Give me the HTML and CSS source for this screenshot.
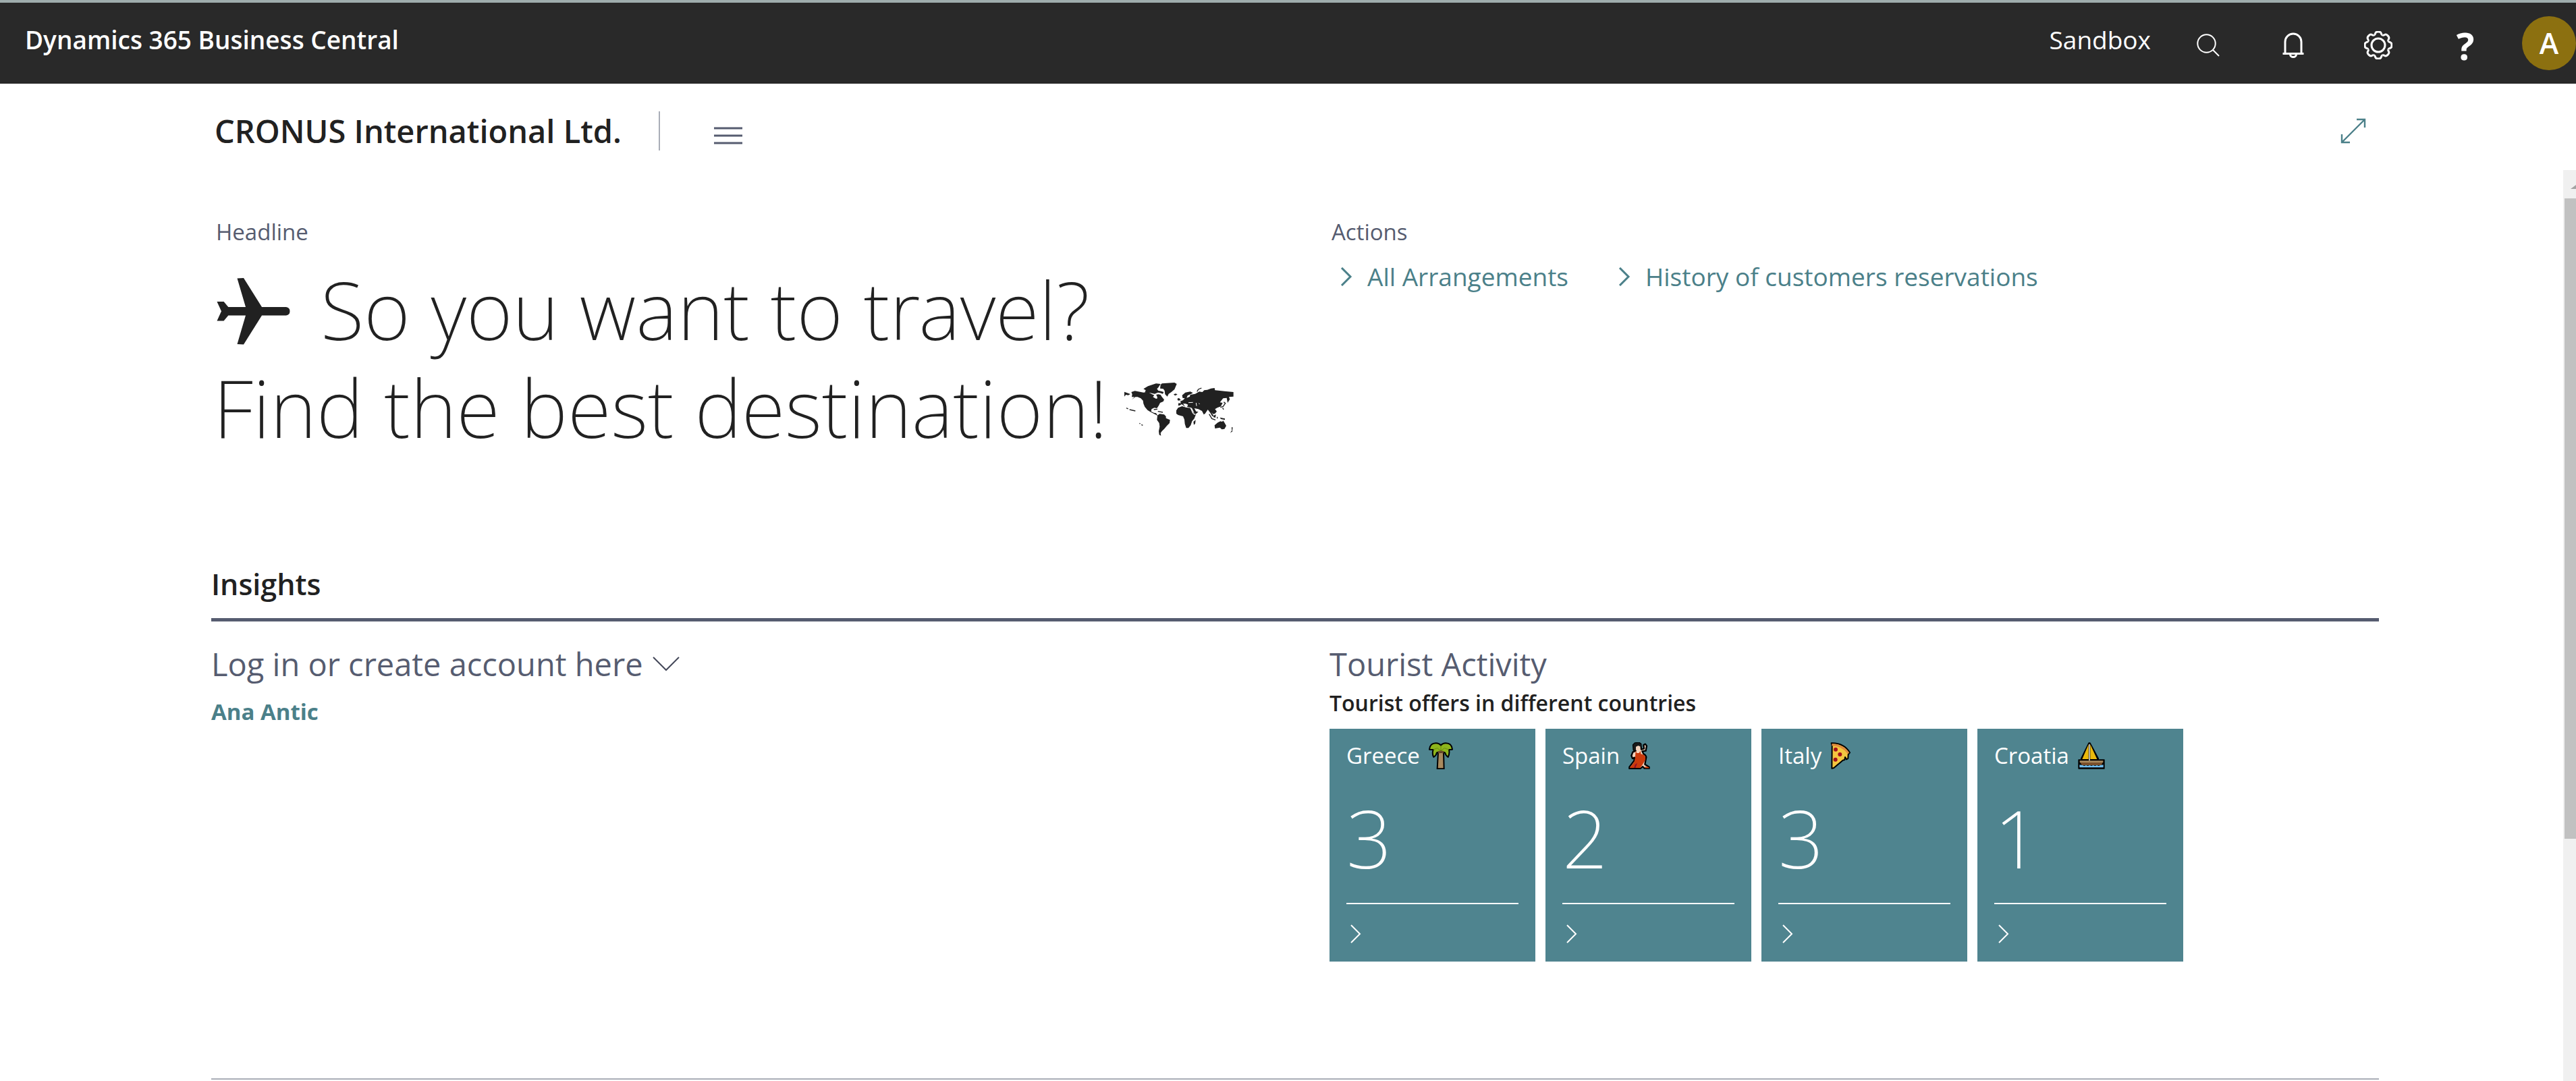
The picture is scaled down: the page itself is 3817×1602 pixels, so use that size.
FILE: index.html
```html
<!DOCTYPE html>
<html lang="en">
<head>
<meta charset="utf-8">
<title>Dynamics 365 Business Central</title>
<link rel="stylesheet" href="styles.css">
</head>
<body>
<header class="topbar">
  <a class="brand" href="#">Dynamics 365 Business Central</a>
  <span class="environment">Sandbox</span>
  <button class="tool" type="button" aria-label="Search">
    <svg width="42" height="42" viewBox="0 0 42 42" class="line-icon"><circle cx="18.500" cy="18.500" r="13.200"/><path d="M28 28L37 37"/></svg>
  </button>
  <button class="tool" type="button" aria-label="Notifications">
    <svg width="42" height="42" viewBox="0 0 42 42" class="line-icon bold"><path d="M9 34V16a12 12 0 0 1 24 0V34M5.500 33.500H36.500M16.500 34.500a4.500 4 0 0 0 9 0"/></svg>
  </button>
  <button class="tool" type="button" aria-label="Settings">
    <svg width="42" height="42" viewBox="-21 -21 42 42" class="line-icon bold">
      <defs><path id="tooth" d="M-6.200 -15C-4.500 -15.500 -4.600 -17 -4.200 -18Q-3.500 -20 0 -20Q3.500 -20 4.200 -18C4.600 -17 4.500 -15.500 6.200 -15"/></defs>
      <circle r="10"/>
      <use href="#tooth"/><use href="#tooth" transform="rotate(45)"/><use href="#tooth" transform="rotate(90)"/><use href="#tooth" transform="rotate(135)"/><use href="#tooth" transform="rotate(180)"/><use href="#tooth" transform="rotate(225)"/><use href="#tooth" transform="rotate(270)"/><use href="#tooth" transform="rotate(315)"/>
    </svg>
  </button>
  <button class="tool help" type="button" aria-label="Help">?</button>
  <button class="avatar" type="button" aria-label="Account">A</button>
</header>

<div class="company-bar">
  <h1 class="company">CRONUS International Ltd.</h1>
  <button class="menu" type="button" aria-label="Menu">
    <svg width="42" height="42" viewBox="0 0 42 42"><path d="M0 17h42M0 28h42M0 39h42" fill="none" stroke="#565c70" stroke-width="3"/></svg>
  </button>
  <button class="expand" type="button" aria-label="Expand">
    <svg width="38" height="38" viewBox="0 0 38 38"><path d="M2 36L36 2M24 2H36V14M2 24V36H14" fill="none" stroke="#4b8089" stroke-width="2.400"/></svg>
  </button>
</div>

<div class="workspace">
  <main class="content">
    <div class="columns intro">
      <section>
        <h2 class="caption">Headline</h2>
        <p class="headline">
          <svg class="plane" width="109" height="99" viewBox="0 0 109 99"><path fill="#212121" d="M30.500 .5L40 0L67 43H103Q108.500 44 108.500 49.200T103 55.500H67L40 98.500L30.500 98L43 55.500H17.300L10.600 63.600H.5L7 49.200L.5 35H10.600L17.300 43H43Z"/></svg>So you want to travel?<br>Find the best destination!<svg class="map" width="162" height="82" viewBox="45 40 486 246"><g fill="#212121"><path d="M76 82L92 77L130 84L150 82L168 92L178 96L172 104L186 112L192 110L190 100L186 94L196 92L206 94L212 104L222 116L218 124L204 130L198 142L190 154L178 152L166 158L164 168L176 174L186 176L190 182L194 188L180 180L160 170L148 162L136 148L130 134L128 120L118 110L104 104L94 104L78 116L90 104L78 104L80 92Z"/><path d="M130 68L150 56L186 44L206 46L196 62L190 68L196 76L208 78L220 82L216 90L204 86L194 84L180 90L160 86L136 84L140 74Z"/><path d="M206 50L212 44L268 40L278 46L268 70L254 82L242 90L236 102L226 92L224 76L218 68L204 66Z"/><path d="M45 81L72 91L62 96L52 94L45 102Z"/><path d="M264 92L274 89L281 93L270 98Z"/><path d="M192 186L202 179L222 182L230 190L230 198L248 206L246 220L234 232L222 246L212 256L206 264L208 276L200 272L198 256L202 236L200 220L190 206Z"/><path d="M276 164L284 152L302 145L318 150L338 153L348 176L356 183L363 182L356 200L346 212L340 230L330 242L320 242L314 224L312 204L306 190L284 184L276 178Z"/><path d="M352 214L362 206L360 222L354 228Z"/><path d="M284 142L286 131L296 132L294 123L306 118L314 110L304 108L302 96L316 84L338 80L350 86L342 90L326 98L322 108L336 102L338 94L360 90L378 80L392 82L400 74L414 72L430 66L446 64L448 74L470 76L490 78L530 82V102L510 104L514 114L504 130L500 108L484 110L470 128L482 130L474 146L458 152L448 158L456 168L448 178L440 180L432 172L442 188L436 190L428 176L416 160L404 178L398 182L390 166L374 158L356 154L364 168L374 170L362 180L352 176L343 152L324 148L328 138L318 134L306 134L316 148L300 136L290 142Z"/><path d="M446 230L460 218L472 212L480 214L484 209L490 218L498 232L490 246L478 248L470 240L448 244Z"/><path d="M280 112L288 108L296 118L284 120ZM440 188L452 182L450 196L442 194ZM516 264L522 252L528 254ZM470 195L492 200L492 206L474 202Z"/></g><g fill="none" stroke="#212121" stroke-width="4"><path d="M368 80L374 70L388 64M54 153L62 157M68 160L94 166M112 221L116 223M121 227L127 230M176 160L192 158M194 168L216 172M422 180L434 200L450 206M458 192V200M487 126L494 132L484 146L472 150M482 152L486 160M524 238V250"/></g><g fill="none" stroke="#fff" stroke-width="3"><path d="M330 129L350 128M364 130L366 144M376 132L380 136M344 154L354 174"/></g></svg>
        </p>
      </section>
      <section>
        <h2 class="caption">Actions</h2>
        <nav class="actions" aria-label="Actions">
          <a href="#"><svg width="18" height="28" viewBox="0 0 18 28"><path d="M2 1L15 14L2 27" fill="none" stroke="#4b8089" stroke-width="3"/></svg>All Arrangements</a>
          <a href="#"><svg width="18" height="28" viewBox="0 0 18 28"><path d="M2 1L15 14L2 27" fill="none" stroke="#4b8089" stroke-width="3"/></svg>History of customers reservations</a>
        </nav>
      </section>
    </div>

    <h2 class="group-title">Insights</h2>

    <div class="columns insights">
      <section>
        <h3 class="part-title"><button class="part-menu" type="button">Log in or create account here<svg width="40" height="24" viewBox="0 0 40 24"><path d="M1 2L20 21L39 2" fill="none" stroke="#45495a" stroke-width="2"/></svg></button></h3>
        <a class="user-link" href="#">Ana Antic</a>
      </section>
      <section>
        <h3 class="part-title">Tourist Activity</h3>
        <h4 class="cue-title">Tourist offers in different countries</h4>
        <div class="tiles">
          <a class="tile" href="#">
            <span class="tile-label">Greece
              <svg width="36" height="40" viewBox="0 0 108 120"><path d="M42 44L38 118H68L66 44Z" fill="#a98a5e" stroke="#000" stroke-width="6"/><path d="M3 32Q6 4 32 4Q46 4 54 14Q62 4 76 4Q102 4 105 32L90 33Q94 50 86 66Q76 60 72 46L54 40L36 46Q34 58 22 66Q14 52 20 33Z" fill="#8db51c" stroke="#000" stroke-width="6" stroke-linejoin="round"/><path d="M20 33L38 26L54 38L70 26L90 33M54 14V38" fill="none" stroke="#6b8a12" stroke-width="3"/><path d="M40 41Q54 34 68 41L64 50L54 46L44 51Z" fill="#6b4a2a"/></svg></span>
            <span class="tile-value">3</span>
            <span class="tile-foot"><svg width="18" height="28" viewBox="0 0 18 28"><path d="M2 1L15 14L2 27" fill="none" stroke="#fff" stroke-width="2"/></svg></span>
          </a>
          <a class="tile" href="#">
            <span class="tile-label">Spain
              <svg width="32" height="40" viewBox="0 0 94 120"><path d="M31 38L18 44L12 60L17 72L26 68L24 82L3 110V117H52L62 108L70 116H91V110L72 98L78 66Q76 56 66 52L60 40L76 38L80 16L74 8L66 12L68 28L56 32L54 8L46 2L28 4L20 12L22 34Z" fill="#f3d3bd" stroke="#000" stroke-width="7" stroke-linejoin="round"/><path d="M31 38L36 48H46L52 38L54 52L68 56Q76 62 74 78L60 102L50 114H5L8 108Q26 90 28 76Z" fill="#c93a0c"/><path d="M38 92L30 114H24L28 100Z" fill="#8e0e2c"/><path d="M72 108L90 111V115H74Z" fill="#d83b01"/><path d="M22 34L20 12L28 4L46 2L55 10V20L42 15L32 20V36Z" fill="#1a1a1a"/></svg></span>
            <span class="tile-value">2</span>
            <span class="tile-foot"><svg width="18" height="28" viewBox="0 0 18 28"><path d="M2 1L15 14L2 27" fill="none" stroke="#fff" stroke-width="2"/></svg></span>
          </a>
          <a class="tile" href="#">
            <span class="tile-label">Italy
              <svg width="31" height="40" viewBox="0 0 93 120"><path d="M5 4Q60 2 87 46L80 54L79 72L72 76L66 66L64 78L56 80L16 114L7 116L8 16Z" fill="#f4c63f" stroke="#000" stroke-width="6" stroke-linejoin="round"/><path d="M7 7Q58 8 84 47L78 52Q52 16 7 16Z" fill="#e08a3e"/><circle cx="24" cy="32" r="9" fill="#a4101c"/><circle cx="43" cy="54" r="9" fill="#a4101c"/><circle cx="23" cy="77" r="9" fill="#a4101c"/></svg></span>
            <span class="tile-value">3</span>
            <span class="tile-foot"><svg width="18" height="28" viewBox="0 0 18 28"><path d="M2 1L15 14L2 27" fill="none" stroke="#fff" stroke-width="2"/></svg></span>
          </a>
          <a class="tile" href="#">
            <span class="tile-label">Croatia
              <svg width="40" height="40" viewBox="0 0 120 120"><path d="M48 3H54L91 72V78H117V117H3V78H14V72Z" fill="#000" stroke="#000" stroke-width="4" stroke-linejoin="round"/><path d="M47 10L19 75H47ZM55 10L85 75H55Z" fill="#eab90c"/><path d="M51 8V82" stroke="#d2cfc4" stroke-width="5"/><path d="M8 82H112V90H8Z" fill="#a98a5e"/><path d="M10 90H110L104 102H18Z" fill="#7a4f2b"/><path d="M7 100L20 102L28 105L36 102L44 105L52 102L60 105L68 102L76 105L84 102L92 105L100 102L113 100V112H7Z" fill="#6fbdf0"/></svg></span>
            <span class="tile-value">1</span>
            <span class="tile-foot"><svg width="18" height="28" viewBox="0 0 18 28"><path d="M2 1L15 14L2 27" fill="none" stroke="#fff" stroke-width="2"/></svg></span>
          </a>
        </div>
      </section>
    </div>
    <hr class="divider">
  </main>
  <div class="scrollbar">
    <svg class="scroll-up" width="16" height="10" viewBox="0 0 16 10"><path d="M0 9L12 0L24 9Z" fill="#a3a3a3"/></svg>
    <div class="scroll-thumb"></div>
  </div>
</div>
</body>
</html>
```
FILE: styles.css
```css
* { box-sizing: border-box; }

body {
  margin: 0;
  height: 100vh;
  display: flex;
  flex-direction: column;
  overflow: hidden;
  background: #fff;
  color: #212121;
  font-family: "Open Sans", sans-serif;
  font-size: 33px;
  line-height: 48px;
}

h1, h2, h3, h4, p { margin: 0; font-weight: 400; }
a { text-decoration: none; color: inherit; }
svg { flex: none; overflow: hidden; }

button {
  margin: 0;
  padding: 0;
  border: 0;
  background: none;
  color: inherit;
  font: inherit;
  cursor: pointer;
}

/* Top bar */
.topbar {
  flex: none;
  display: flex;
  height: 124px;
  border-top: 4px solid #9fadad;
  background: #292929;
  color: #fff;
  font-size: 37px;
  line-height: 110px;
}
.brand { margin-left: 37px; font-weight: 600; }
.environment { margin-left: auto; padding-right: 22px; }
.tool {
  display: flex;
  align-items: center;
  justify-content: center;
  width: 126px;
  padding-top: 6px;
}
.help { padding-left: 6px; font-size: 56px; font-weight: 700; line-height: 60px; }
.avatar {
  align-self: center;
  width: 80px;
  height: 80px;
  margin-left: 24px;
  border-radius: 50%;
  background: #8c7010;
  font-size: 43px;
  font-weight: 600;
  line-height: 80px;
}
.line-icon { fill: none; stroke: #fff; stroke-width: 2; }
.line-icon.bold { stroke-width: 3; }

/* Company row */
.company-bar {
  flex: none;
  display: flex;
  align-items: center;
  height: 128px;
  padding: 12px 311px 0 318px;
}
.company { font-size: 47px; font-weight: 600; line-height: 64px; }
.menu {
  display: flex;
  align-items: center;
  height: 58px;
  margin-left: 55px;
  padding-left: 80px;
  border-left: 2px solid #a9adb7;
}
.expand { display: flex; margin-left: auto; }

/* Scrolling area */
.workspace { flex: 1; display: flex; min-height: 0; }
.content { flex: 1; padding: 68px 273px 0 313px; }
.columns { display: grid; grid-template-columns: 1fr 1fr; column-gap: 102px; }
.intro > section { padding-left: 3px; }
.intro > section:first-child .caption { padding-left: 4px; }

.caption { color: #565c70; font-size: 33px; line-height: 48px; }
.headline {
  margin-top: 18px;
  font-family: "Noto Sans", sans-serif;
  font-size: 118px;
  font-weight: 200;
  line-height: 145px;
  white-space: nowrap;
}
.plane { margin: 0 45px 0 5px; vertical-align: -7px; }
.map { margin-left: 25px; vertical-align: baseline; }

.actions {
  display: flex;
  gap: 74px;
  margin-top: 12px;
  padding-left: 13px;
  color: #4b8089;
  font-size: 37px;
  line-height: 60px;
}
.actions a { display: flex; align-items: center; gap: 22px; }

.group-title {
  margin-top: 160px;
  padding-bottom: 20px;
  border-bottom: 5px solid #565c70;
  font-size: 43px;
  font-weight: 600;
  line-height: 60px;
}

.insights { padding-top: 31px; }
.part-title { color: #565c70; font-size: 47px; line-height: 64px; }
.part-menu { display: flex; align-items: center; gap: 14px; }
.user-link {
  display: block;
  margin-top: 15px;
  color: #4b8089;
  font-weight: 700;
}
.cue-title { margin-top: 4px; font-size: 32px; font-weight: 600; line-height: 44px; }

/* Cue tiles */
.tiles { display: flex; gap: 15px; margin-top: 16px; }
.tile {
  display: flex;
  flex-direction: column;
  width: 305px;
  padding: 16px 25px 0;
  background: #4f848f;
  color: #fff;
}
.tile-label { display: flex; align-items: center; gap: 13px; }
.tile-value {
  margin-top: 28px;
  font-family: "Noto Sans", sans-serif;
  font-size: 118px;
  font-weight: 200;
  line-height: 140px;
}
.tile-foot {
  display: flex;
  margin-top: 26px;
  padding: 30px 5px 27px;
  border-top: 2px solid #fff;
}

.divider {
  height: 2px;
  margin: 173px 0 0;
  border: 0;
  background: #a9adb7;
}

/* Scroll bar */
.scrollbar { display: flex; flex-direction: column; width: 19px; background: #f0f0f0; }
.scroll-up { margin: 19px 0 13px 11px; }
.scroll-thumb { width: 17px; height: 70.3%; margin-left: 2px; background: #c1c1c1; }
```
